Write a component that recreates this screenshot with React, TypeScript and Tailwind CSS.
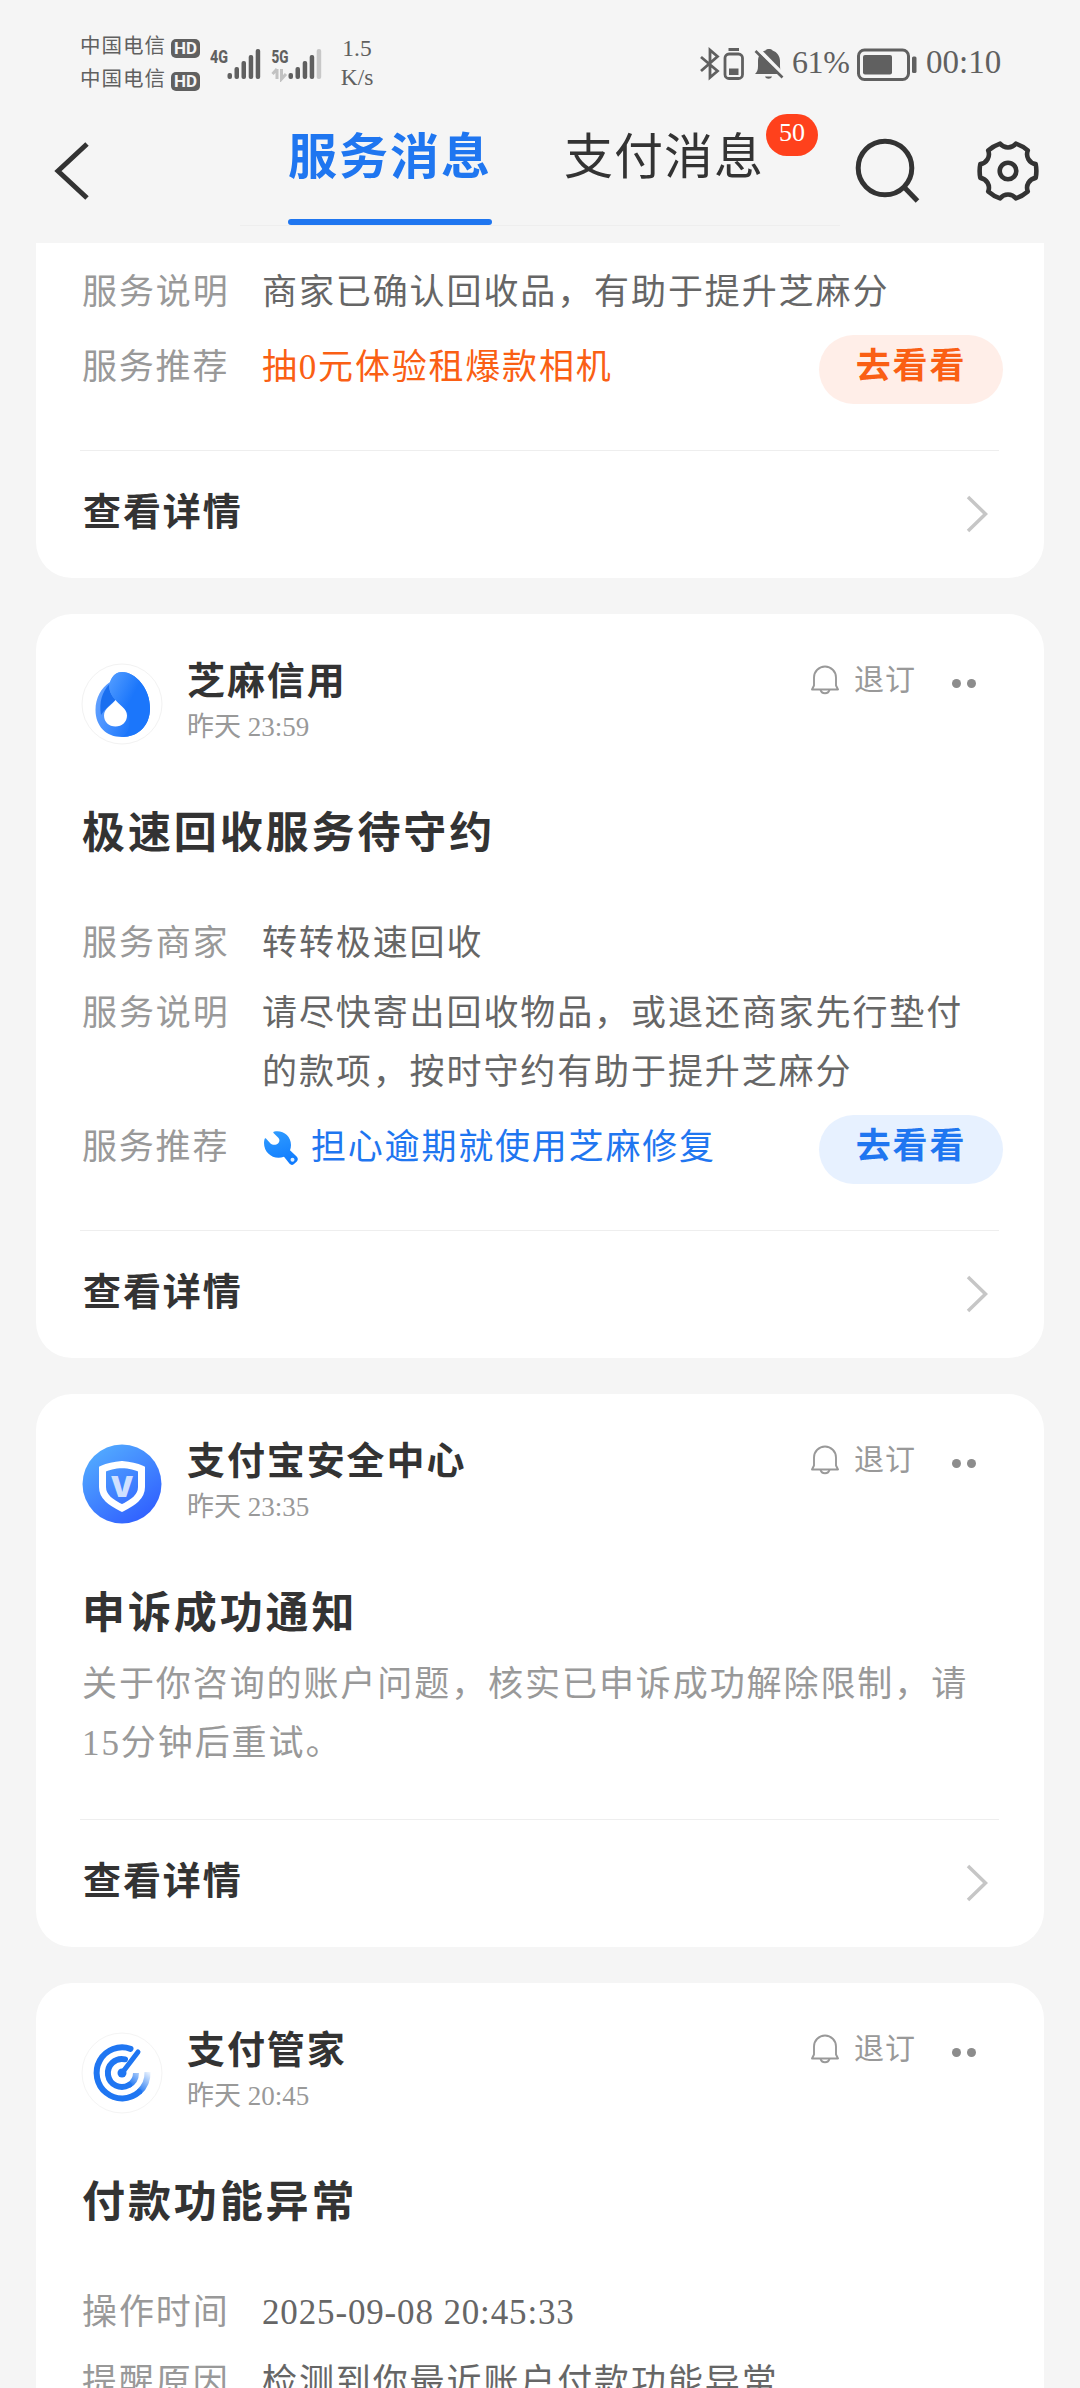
import type { ReactNode } from 'react'
import { clsx } from 'clsx'

type Row = {
  label: string
  value: string
  tracking?: string
}

type Promo = {
  text: string
  tone: 'orange' | 'blue'
  icon?: ReactNode
}

type Message = {
  id: string
  sender?: string
  time?: string
  avatar?: ReactNode
  title?: string
  body?: string
  rows?: Row[]
  promo?: Promo
}

function SesameAvatar() {
  return (
    <svg width="82" height="82" viewBox="-1 -1 82 82">
      <defs>
        <linearGradient id="drop" gradientUnits="userSpaceOnUse" x1="27" y1="22" x2="50" y2="34">
          <stop offset="0" stopColor="#4a97ff" />
          <stop offset="1" stopColor="#1b76fb" />
        </linearGradient>
        <linearGradient id="rim" gradientUnits="userSpaceOnUse" x1="13" y1="42" x2="52" y2="56">
          <stop offset="0" stopColor="#5f9fff" />
          <stop offset="0.35" stopColor="#4a93ff" />
          <stop offset="1" stopColor="#1b76fb" />
        </linearGradient>
      </defs>
      <circle cx="40" cy="40" r="40" fill="#fff" stroke="#f2f2f2" />
      <path d="M40 8C54 8 68 25 68 44C68 62 56 73 40 73C24 73 13.500 62 13.500 46C13.500 34 19 24 28 18C30 12 34 8 40 8Z" fill="url(#rim)" />
      <path d="M27.500 20C20 28 17 38 19 51C22 46 28 41 33.500 36C29 31 26.500 26 27.500 20Z" fill="#1a6ff0" />
      <path d="M40 8C54 8 68 25 68 44C68 62 56 73 40 73C47 70 50 58 45 48L33.500 36C27 29 26 22 29 16C31 11 35 8 40 8Z" fill="url(#drop)" />
      <path d="M33.500 36C37 41 45 44.500 45 51.500C45 58 40 62.500 33.500 62.500C27 62.500 22 58 22 51.500C22 44.500 30 41 33.500 36Z" fill="#fff" />
    </svg>
  )
}

function SecurityAvatar() {
  return (
    <svg width="82" height="82" viewBox="-1 -1 82 82">
      <defs>
        <linearGradient id="sec" x1="0.1" y1="0" x2="0.8" y2="1">
          <stop offset="0" stopColor="#55b0ff" />
          <stop offset="1" stopColor="#2f5dff" />
        </linearGradient>
      </defs>
      <circle cx="40" cy="40" r="39.5" fill="url(#sec)" />
      <path
        d="M40 20.5C46 21 54 22.500 59.500 25V43C59.500 53 51 58.500 40 64C29 58.500 20.500 53 20.500 43V25C26 22.500 34 21 40 20.500Z"
        fill="none"
        stroke="#fff"
        strokeWidth="7"
      />
      <text x="40" y="52.500" textAnchor="middle" fontFamily="Inter" fontWeight="900" fontSize="29" fill="#cfe0ff">V</text>
    </svg>
  )
}

function StewardAvatar() {
  return (
    <svg width="82" height="82" viewBox="-1 -1 82 82">
      <defs>
        <linearGradient id="fade" gradientUnits="userSpaceOnUse" x1="48" y1="52" x2="62" y2="34">
          <stop offset="0" stopColor="#1f76f2" />
          <stop offset="1" stopColor="#1f76f2" stopOpacity="0.05" />
        </linearGradient>
      </defs>
      <circle cx="40" cy="40" r="40" fill="#fff" stroke="#f4f4f4" />
      <g fill="none" strokeWidth="6" strokeLinecap="round">
        <path d="M48.500 15.800A25.500 25.500 0 1 0 57 59" stroke="#1f76f2" />
        <path d="M57 59A25.500 25.500 0 0 0 65.500 39" stroke="url(#fade)" strokeLinecap="butt" />
        <path d="M43 26.300A14 14 0 1 0 47 52" stroke="#1f76f2" />
        <path d="M47 52A14 14 0 0 0 54 40" stroke="url(#fade)" strokeLinecap="butt" />
        <path d="M40 40L56 19" stroke="#1f76f2" strokeWidth="5" />
      </g>
      <circle cx="40" cy="40" r="4.500" fill="#1f76f2" />
    </svg>
  )
}

function WrenchIcon() {
  return (
    <svg width="37" height="36" viewBox="0 0 37 36" className="shrink-0">
      <defs>
        <linearGradient id="wrench" x1="0.3" y1="0" x2="0.6" y2="1">
          <stop offset="0" stopColor="#2f9bff" />
          <stop offset="1" stopColor="#0f7bff" />
        </linearGradient>
      </defs>
      <path
        d="M11.500 3C11 2.500 11.500 1.800 12.500 1.600C21 0 29 6 29 15C29 17 28.600 18.800 28 20.300L34.600 26.500C36.200 28 36.200 30 34.800 31.500L32 34C30.500 35.300 29 35.200 27.600 33.800L22 26.800C12 30.500 2 23.500 2 13C2 11.500 2.200 10.200 2.600 9C3 8.200 3.600 8.200 4.200 8.800L8.500 13.500C10 15 14 15.500 16 13.500C18 11.500 17.800 9.500 16.300 7.800Z"
        fill="url(#wrench)"
      />
      <circle cx="30.500" cy="29.800" r="2" fill="#dceeff" />
    </svg>
  )
}

function BellIcon() {
  return (
    <svg width="28" height="30" viewBox="0 0 28 30" fill="none" stroke="#999" strokeWidth="1.900" strokeLinejoin="round">
      <path d="M3 20.500V12.500A11 11 0 0 1 25 12.500V20.500L27 24.500H1Z" />
      <path d="M9.500 24.500C10.500 29.500 17.500 29.500 18.500 24.500" />
    </svg>
  )
}

function StatusBar() {
  return (
    <div className="flex h-24 items-start pt-[30px] pl-[80px] text-[#606060]">
      <div className="w-[92px] text-[20.500px] leading-[33px] tracking-[1px] whitespace-nowrap">
        {[0, 1].map(i => (
          <div key={i} className="flex items-center">
            <span className="w-[91px] shrink-0">中国电信</span>
            <span className="mt-[4px] flex h-[19px] w-[29px] shrink-0 items-center justify-center rounded-[5px] bg-[#606060] font-['Roboto'] text-[17px] font-bold tracking-normal text-[#f5f5f5]">
              HD
            </span>
          </div>
        ))}
      </div>

      <svg width="114" height="36" viewBox="0 0 114 36" className="mt-[16px] ml-[38px]" fill="#606060">
        <g fontFamily="Roboto" fontWeight="800" fontSize="19">
          <text x="0" y="16.500" textLength="18" lengthAdjust="spacingAndGlyphs">4G</text>
          <text x="61.500" y="16.500" textLength="17" lengthAdjust="spacingAndGlyphs">5G</text>
        </g>
        <rect x="17.500" y="27" width="4.500" height="6" rx="2" />
        <rect x="24.500" y="21" width="4.500" height="12" rx="2" />
        <rect x="31.500" y="15" width="4.500" height="18" rx="2" />
        <rect x="38.700" y="9" width="4.500" height="24" rx="2" />
        <rect x="45.700" y="3" width="4.500" height="30" rx="2" />
        <path d="M67 23V33M67 23L62.500 28M71.500 23V33L76 28" stroke="#c2c2c2" strokeWidth="3" fill="none" />
        <rect x="78.500" y="27" width="4.500" height="6" rx="2" />
        <rect x="85.500" y="21" width="4.500" height="12" rx="2" />
        <rect x="92.700" y="15" width="4.500" height="18" rx="2" />
        <rect x="99.700" y="9" width="4.500" height="24" rx="2" />
        <rect x="106.700" y="3" width="4.500" height="30" rx="2" fill="#c8c8c8" />
      </svg>

      <div className="mt-[4px] ml-[13px] w-10 text-center text-[23.500px] leading-[29px]">
        <div>1.5</div>
        <div>K/s</div>
      </div>

      <div className="mt-[16px] ml-[323px] flex items-center">
        <svg width="44" height="36" viewBox="0 0 44 36" fill="none" stroke="#606060">
          <path d="M1 11L17.500 25L10 31.500V4L17.500 10.500L1 25" strokeWidth="2.800" />
          <rect x="25" y="8" width="17.500" height="24.500" rx="4" strokeWidth="2.800" />
          <rect x="29" y="22.500" width="9.500" height="6.500" fill="#606060" stroke="none" />
          <path d="M28.500 3.500H39" strokeWidth="3" />
        </svg>
        <svg width="30" height="36" viewBox="0 0 30 36" fill="#606060" className="ml-[10px]">
          <path d="M1 28C3 26 4 24 4 20V15C4 8 9 5 11.500 4.500C12 2.500 18 2.500 18.500 4.500C23 6 26 10 26 15V20C26 24 27 26 28 28Z" />
          <path d="M11 30.500H18C17 33.500 12 33.500 11 30.500Z" />
          <path d="M3 2L29 28.500" stroke="#f5f5f5" strokeWidth="4" />
          <path d="M1.500 5L28.500 31.500" stroke="#606060" strokeWidth="2.600" />
        </svg>
        <span className="-mt-[5px] ml-[8px] w-[60px] text-[32px] leading-9 tracking-[-0.400px]">61%</span>
        <svg width="62" height="36" viewBox="0 0 62 36" className="ml-[4px]">
          <rect x="2.500" y="4" width="50" height="29.500" rx="6" fill="none" stroke="#606060" strokeWidth="3" />
          <rect x="7" y="9" width="29" height="19.500" rx="2" fill="#606060" />
          <rect x="56" y="10.500" width="4.500" height="16.500" rx="1.500" fill="#606060" />
        </svg>
        <span className="-mt-[5px] ml-[8px] text-[33px] leading-9">00:10</span>
      </div>
    </div>
  )
}

function NavBar() {
  return (
    <div className="flex h-[147px] items-start">
      <svg width="36" height="60" viewBox="0 0 36 60" className="mt-[45px] ml-[54px]" fill="none" stroke="#333" strokeWidth="5">
        <path d="M33 3L4 30L33 57" />
      </svg>

      <div className="ml-[150px] flex h-[130px] w-[600px] border-b border-[#eee] pl-[48px] text-[49px] whitespace-nowrap">
        <div className="flex w-[204px] flex-col justify-between font-bold text-[#1f76f0]">
          <span className="mt-[27px] leading-[70px] tracking-[2px]">服务消息</span>
          <span className="h-[6px] rounded-full bg-[#1f76f0]" />
        </div>
        <div className="relative ml-[72px] w-[202px] text-[#333]">
          <span className="mt-[27px] block leading-[70px] tracking-[1px]">支付消息</span>
          <span className="absolute top-[18px] left-[202px] h-[42px] w-[52px] rounded-full bg-[#ff411c] pt-[2px] text-center text-[26px] leading-[34px] text-white">
            50
          </span>
        </div>
      </div>

      <svg width="72" height="72" viewBox="0 0 72 72" className="mt-[38px] ml-[12px]" fill="none" stroke="#333" strokeWidth="5">
        <circle cx="33" cy="34" r="26.800" />
        <path d="M52 53L65.500 67" />
      </svg>
      <svg width="64" height="64" viewBox="-32 -32 64 64" className="mt-[43px] ml-[52px]" fill="none" stroke="#333" strokeWidth="4.600" strokeLinejoin="round">
        <path d="M27.700 6.900A10 10 0 0 0 19.800 20.500A36 36 0 0 1 7.900 27.400A10 10 0 0 0 -7.900 27.400A36 36 0 0 1 -19.800 20.500A10 10 0 0 0 -27.700 6.900A36 36 0 0 1 -27.700 -6.900A10 10 0 0 0 -19.800 -20.500A36 36 0 0 1 -7.900 -27.400A10 10 0 0 0 7.900 -27.400A36 36 0 0 1 19.800 -20.500A10 10 0 0 0 27.700 -6.900A36 36 0 0 1 27.700 6.900Z" />
        <circle r="8.300" />
      </svg>
    </div>
  )
}

function CardHeader({ message }: { message: Message }) {
  return (
    <div className="flex h-[132px] items-start">
      <div className="mt-[49px] -ml-px shrink-0">{message.avatar}</div>
      <div className="mt-[40px] ml-[24px] flex-1">
        <div className="text-[38px] leading-[54px] font-bold tracking-[1.900px] text-[#333]">{message.sender}</div>
        <div className="text-[27px] leading-[38px] text-[#999]">{message.time}</div>
      </div>
      <div className="mt-[51px] mr-[22px] flex">
        <BellIcon />
        <span className="-mt-[5px] ml-[15px] text-[30px] leading-[40px] tracking-[1px] text-[#999]">退订</span>
        <span className="mt-[14px] ml-[36px] flex gap-[6px]">
          <i className="size-[9px] rounded-full bg-[#8c8c8c]" />
          <i className="size-[9px] rounded-full bg-[#8c8c8c]" />
        </span>
      </div>
    </div>
  )
}

function CardFooter() {
  return (
    <div className="mr-[-1px] -ml-[2px] flex h-[128px] items-start justify-between border-t border-[#eee] pr-[11px] pl-[3px]">
      <span className="mt-[33px] text-[38px] leading-[56px] font-bold tracking-[1.900px] text-[#333]">查看详情</span>
      <svg width="22" height="38" viewBox="0 0 22 38" className="mt-[44px]" fill="none" stroke="#c6c6c6" strokeWidth="3.500">
        <path d="M2 2L19.500 19L2 36" />
      </svg>
    </div>
  )
}

function MessageCard({ message, partial }: { message: Message; partial?: boolean }) {
  const { title, body, rows, promo } = message

  return (
    <section
      className={clsx(
        'bg-white pr-[46px] pl-[46px]',
        partial ? 'rounded-b-[36px] pt-[20px]' : 'rounded-[36px]'
      )}
    >
      {message.sender && <CardHeader message={message} />}
      {title && (
        <h2 className="mt-[56px] text-[43px] leading-[64px] font-bold tracking-[2.900px] text-[#333]">{title}</h2>
      )}

      {body && (
        <p className="mt-[9px] mb-[46px] text-[35px] leading-[59px] tracking-[1.920px] text-[#999]">{body}</p>
      )}

      {rows && (
        <div
          className={clsx(
            'flex flex-col gap-[11px] text-[35px] leading-[59px] tracking-[1.900px]',
            !partial && 'mt-[48px]'
          )}
        >
          {rows.map(row => (
            <div key={row.label} className="flex pr-5">
              <span className="w-[180px] shrink-0 text-[#999]">{row.label}</span>
              <span className={clsx('text-[#666]', row.tracking)}>{row.value}</span>
            </div>
          ))}
        </div>
      )}

      {promo && (
        <div className="mt-[13px] mr-[-5px] mb-[46px] flex h-[69px] items-start text-[35px] leading-[66px] tracking-[1.800px]">
          <span className="w-[180px] shrink-0 text-[#999]">服务推荐</span>
          <span
            className={clsx(
              'flex flex-1 items-center gap-[12px]',
              promo.tone === 'orange' ? 'text-[#fa5f14]' : 'text-[#1f76f0]'
            )}
          >
            {promo.icon}
            {promo.text}
          </span>
          <button
            className={clsx(
              'h-[69px] w-[184px] rounded-full pb-[6px] text-center leading-[63px] font-bold',
              promo.tone === 'orange' ? 'bg-[#ffeee8] text-[#fa5f14]' : 'bg-[#e7f1ff] text-[#1f76f0]'
            )}
          >
            去看看
          </button>
        </div>
      )}

      <CardFooter />
    </section>
  )
}

const messages: Message[] = [
  {
    id: 'recycle-confirmed',
    rows: [{ label: '服务说明', value: '商家已确认回收品，有助于提升芝麻分' }],
    promo: { text: '抽0元体验租爆款相机', tone: 'orange' },
  },
  {
    id: 'recycle-pending',
    sender: '芝麻信用',
    time: '昨天 23:59',
    avatar: <SesameAvatar />,
    title: '极速回收服务待守约',
    rows: [
      { label: '服务商家', value: '转转极速回收' },
      { label: '服务说明', value: '请尽快寄出回收物品，或退还商家先行垫付的款项，按时守约有助于提升芝麻分' },
    ],
    promo: { text: '担心逾期就使用芝麻修复', tone: 'blue', icon: <WrenchIcon /> },
  },
  {
    id: 'appeal',
    sender: '支付宝安全中心',
    time: '昨天 23:35',
    avatar: <SecurityAvatar />,
    title: '申诉成功通知',
    body: '关于你咨询的账户问题，核实已申诉成功解除限制，请15分钟后重试。',
  },
  {
    id: 'payment-error',
    sender: '支付管家',
    time: '昨天 20:45',
    avatar: <StewardAvatar />,
    title: '付款功能异常',
    rows: [
      { label: '操作时间', value: '2025-09-08 20:45:33', tracking: 'tracking-[0.850px]' },
      { label: '提醒原因', value: '检测到你最近账户付款功能异常' },
    ],
  },
]

export default function App() {
  return (
    <div className="h-[2388px] w-[1080px] overflow-hidden bg-[#f5f5f5] font-['Liberation_Serif','Noto_Sans_CJK_SC',serif]">
      <header>
        <StatusBar />
        <NavBar />
      </header>
      <main className="flex flex-col gap-[36px] px-[36px]">
        {messages.map((message, i) => (
          <MessageCard key={message.id} message={message} partial={i === 0} />
        ))}
      </main>
    </div>
  )
}
